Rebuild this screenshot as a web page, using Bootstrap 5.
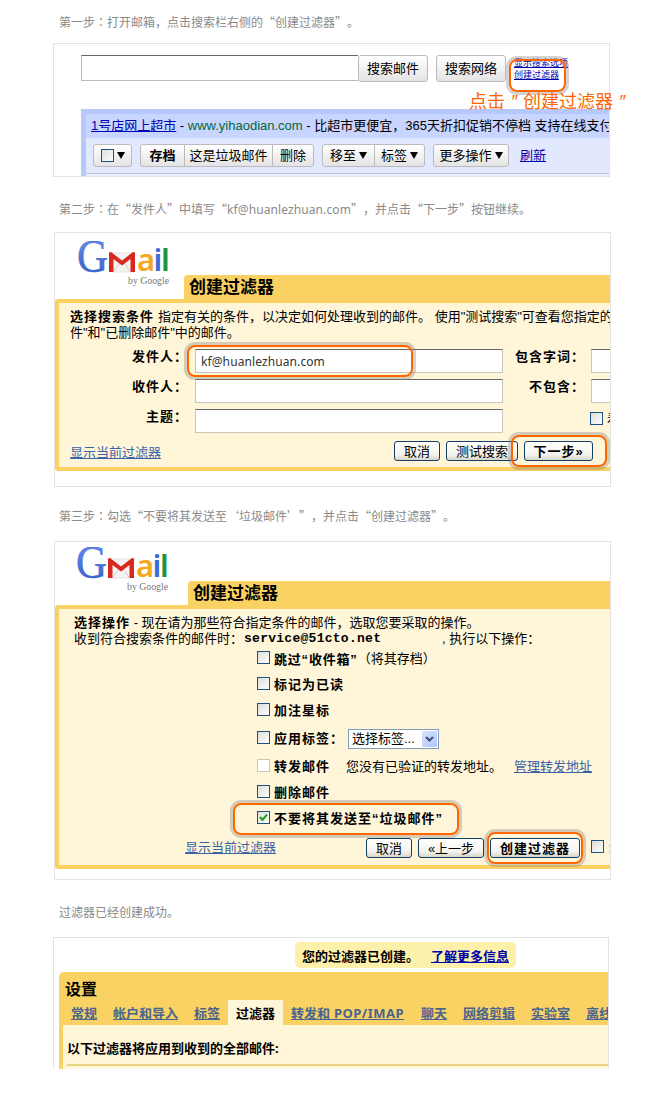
<!DOCTYPE html>
<html lang="zh-CN">
<head>
<meta charset="utf-8">
<meta name="viewport" content="width=device-width, initial-scale=1">
<title>创建过滤器</title>
<link href="https://cdn.jsdelivr.net/npm/bootstrap@5.3.0/dist/css/bootstrap.min.css" rel="stylesheet">
<style>
body{background:#fff;color:#000;font:13px/16px "Liberation Sans","Noto Sans CJK SC",sans-serif;width:666px;height:1110px;overflow:hidden;white-space:nowrap;text-spacing-trim:space-all}
.step{font:12px/18px "Noto Sans CJK SC",sans-serif;color:#8a8a8a;height:18px;margin:0 0 0 59px;font-feature-settings:"chws" 0,"halt" 0}
.step .colon{font-family:"Noto Sans CJK TC",sans-serif}
.step .latin,.fld{font-family:"Noto Sans","Noto Sans CJK SC",sans-serif}
.step .latin{font-size:12px;letter-spacing:.1px}
.shot{border:1px solid #e3e3e3;overflow:hidden;width:557px}
.wide{letter-spacing:1px;font-weight:700}
.cjk{font-family:"Noto Sans CJK SC",sans-serif}
.ring{position:absolute;border:2px solid #f60;border-radius:8px;box-shadow:0 0 0 3px rgba(120,120,120,.33);z-index:3}
/* mail search panel */
.one{height:134px;margin:12px 0 0 53px}
.srow{padding:11px 0 0 27px;height:65px}
.sbox{width:277px;height:26px;border:1px solid #bbb;border-top-color:#666;border-right:0}
.gb{background:linear-gradient(#fff,#e4e4e4);border:1px solid #bbb;border-radius:3px;color:#000;font-size:13px;line-height:16px;padding:0;display:flex;align-items:center;justify-content:center}
.sb{width:70px;height:27px}
.mini{font-size:9px;line-height:12px;margin:2px 0 0 8px}
.mini a,.blue{color:#0000b0;text-decoration:underline}
.mini a{display:block}
.call{position:absolute;left:469px;top:89px;font:18px/22px "Noto Sans CJK SC",sans-serif;color:#f60;z-index:4}
.call i{display:inline-block;width:18px;text-align:center;font-family:"Liberation Sans",sans-serif}
.mail{margin-left:27px;background:#b7c8fc;padding:5px 0 0 5px;height:70px}
.head1{background:#c8d5ff;height:24px;padding:4px 0 0 5px}
.green{color:#00683c}
.tools{background:#e2e9ff;height:36px;padding:6px 0 0 7px;border-bottom:1px solid #bfc6d8;box-shadow:0 4px 0 #e8eeff}
.tools .gb{height:23px;border-radius:0;margin-right:-1px}
.tools .st{border-radius:3px 0 0 3px}.tools .en{border-radius:0 3px 3px 0;margin-right:0}.tools .bo{border-radius:3px;margin-right:0}
.tri{width:0;height:0;border:4px solid transparent;border-top:7px solid #000;border-bottom:0;margin-left:3px}
.cbx{width:13px;height:13px;border:1px solid #1c5180;background:linear-gradient(135deg,#dcdcd7,#fff);flex:none}
.cbx.off{border-color:#cac8bb;background:#fff}
/* yellow form panels */
.two{height:255px;margin:14px 0 0 54px}
.three{height:339px;margin:16px 0 0 54px}
.top{height:66px}
.tab1{background:#fad163;border-radius:4px 0 0 0;height:28px;font-weight:700;font-size:17px;line-height:26px;padding-left:5px;flex:1;align-self:flex-end;margin-bottom:-4px}
.ybox{border:4px solid #fad163;border-right:0;border-radius:4px 0 0 4px;background:#fff5d8}
.ybox2{height:172px;padding:6px 0 0 11px}
.ybox3{height:264px;padding:6px 0 0 15px}
.frow{display:grid;grid-template-columns:118px 7px 308px 6px 76px 6px 40px;height:30px}
.frow .wide{text-align:right;padding-top:0}
.fld{height:24px;border:1px solid #c9c7ba;border-top-color:#666;background:#fff;font-size:12px;line-height:23px;color:#333;padding-left:5px;letter-spacing:.1px}
.link{color:#3c62a6;text-decoration:underline;flex:none}
.xp{height:20px;border:1px solid #12406b;border-radius:3px;background:linear-gradient(#fff,#f3f3ee 70%,#d8d4c8);color:#000;font-size:13px;line-height:17px;text-align:center;padding:0;flex:none}
.opt{display:flex;align-items:center;height:26px;padding-left:183px}
.opt .cbx{margin-bottom:3px}
.opt .wide{margin-left:4px}
.sel{width:91px;height:20px;border:1px solid #7f9db9;background:#fff;padding:0 1px 0 3px;display:flex;align-items:center;justify-content:space-between}
.arr{width:15px;height:16px;background:linear-gradient(135deg,#d7e3ff,#b2c6f5);border-radius:1px}
/* settings panel */
.four{height:132px;margin:16px 0 0 53px;border-bottom:0;width:556px;font-family:"Noto Sans","Noto Sans CJK SC",sans-serif;font-weight:700}
.note{background:#fdf0aa;border-radius:5px;width:221px;height:26px;margin:4px 0 0 241px;padding:6px 7px 0}
.set{margin:4px 0 0 5px;background:#fad163;border-radius:5px 0 0 0;height:98px;padding-left:4px}
.set h1{font-size:16px;line-height:20px;font-weight:700;margin:0;padding:7px 0 0 2px;height:28px}
.tabs{height:25px;display:grid;grid-template-columns:42px 81px 34px 63px 130px 42px 68px 55px 40px;padding-left:8px;line-height:27px}
.tabs a{color:#47658f;text-decoration:underline}
.act{background:#fff5d8;width:55px;text-align:center}
.body4{background:#fff5d8;height:45px;padding:15px 0 0 4px}
.rule{border-top:2px solid #ead283;background:#fff8de;height:5px;margin-top:8px}
</style>
</head>
<body>
<svg width="0" height="0" class="position-absolute"><defs>
<linearGradient id="gg" x2="0" y2="1"><stop offset="0" stop-color="#6d94ea"/><stop offset="1" stop-color="#2e59c9"/></linearGradient>
<symbol id="gmail" viewBox="0 0 100 50">
<text x="0" y="31" font-family="Liberation Serif" font-size="46" fill="url(#gg)" stroke="#3f69d0" stroke-width=".5" textLength="31" lengthAdjust="spacingAndGlyphs">G</text>
<path d="M33 12H57V31H33Z" fill="#f6f4f2" stroke="#d9d4d0" stroke-width=".6"/>
<path d="M37 30L43 22M53 30L47 22" stroke="#ccc" fill="none"/>
<path d="M32 12Q32 11 34 11L45 19.5L56 11Q58 11 58 12V31H53.5V18L45 24.5L36.5 18V31H32Z" fill="#d8281f"/>
<text y="30" font-family="Noto Sans" font-size="31" font-weight="600"><tspan x="60" fill="#f5a81c">a</tspan><tspan x="76.5" fill="#3d6ad6">i</tspan><tspan x="84" fill="#209341">l</tspan></text>
<text x="51" y="43" font-family="Liberation Serif" font-size="10" fill="#777" textLength="41" lengthAdjust="spacingAndGlyphs">by Google</text>
</symbol></defs></svg>

<p class="step" style="margin-top:13px">第一步<span class="colon" lang="zh-TW">：</span>打开邮箱，点击搜索栏右侧的“创建过滤器<span>”</span><span class="d-inline-block">。</span></p>
<section class="shot one">
  <div class="srow d-flex">
    <div class="sbox"></div>
    <button class="gb sb">搜索邮件</button>
    <button class="gb sb ms-2">搜索网络</button>
    <div class="mini"><a href="#">显示搜索选项</a><a href="#">创建过滤器</a></div>
  </div>
  <div class="mail">
    <div class="head1"><a href="#" class="blue">1号店网上超市</a> - <span class="green">www.yihaodian.com</span> - 比超市更便宜，365天折扣促销不停档 支持在线支付</div>
    <div class="tools d-flex">
      <button class="gb bo me-2" style="width:39px"><span class="cbx"></span><span class="tri"></span></button>
      <button class="gb st fw-bold" style="width:45px">存档</button>
      <button class="gb" style="width:89px">这是垃圾邮件</button>
      <button class="gb en me-2" style="width:42px">删除</button>
      <button class="gb st" style="width:53px">移至<span class="tri"></span></button>
      <button class="gb en me-2" style="width:51px">标签<span class="tri"></span></button>
      <button class="gb bo" style="width:76px">更多操作<span class="tri"></span></button>
      <a href="#" class="blue pt-1" style="margin-left:11px">刷新</a>
    </div>
  </div>
</section>
<div class="ring" style="left:509px;top:59px;width:57px;height:33px"></div>
<div class="call">点击<i>″</i>创建过滤器<i>″</i></div>

<p class="step" style="margin-top:23px">第二步<span class="colon" lang="zh-TW">：</span>在“发件人”中填写“<span class="latin">kf@huanlezhuan.com</span>”<span class="d-inline-block">，</span>并点击“下一步”按钮继续。</p>
<section class="shot two">
  <div class="top d-flex">
    <svg width="100" height="50" style="margin:8px 7px 0 22px"><use href="#gmail"/></svg>
    <div class="tab1">创建过滤器</div>
  </div>
  <div class="ybox ybox2">
    <div><span class="wide">选择搜索条件</span><span class="ms-1">指定有关的条件，以决定如何处理收到的邮件。 使用"测试搜索"可查看您指定的</span></div>
    <div style="height:18px">件"和"已删除邮件"中的邮件。</div>
    <div style="padding-top:6px">
      <div class="frow"><span class="wide">发件人：</span><span></span><div class="fld">kf@huanlezhuan.com</div><span></span><span class="wide">包含字词：</span><span></span><div class="fld"></div></div>
      <div class="frow"><span class="wide">收件人：</span><span></span><div class="fld"></div><span></span><span class="wide">不包含：</span><span></span><div class="fld"></div></div>
      <div class="frow"><span class="wide">主题：</span><span></span><div class="fld"></div><span></span><span></span><span></span><div class="d-flex gap-1" style="padding-top:3px;margin-left:-1px"><span class="cbx"></span>看</div></div>
    </div>
    <div class="d-flex" style="padding-top:2px">
      <a href="#" class="link" style="width:324px;padding-top:4px">显示当前过滤器</a>
      <button class="xp" style="width:46px">取消</button>
      <button class="xp" style="width:72px;margin:0 6px">测试搜索</button>
      <button class="xp wide" style="width:69px">下一步»</button>
    </div>
  </div>
</section>
<div class="ring" style="left:187px;top:345px;width:226px;height:32px"></div>
<div class="ring" style="left:511px;top:435px;width:96px;height:32px"></div>

<p class="step" style="margin-top:20px">第三步<span class="colon" lang="zh-TW">：</span>勾选“不要将其发送至‘垃圾邮件’<span class="d-inline-block">”</span><span class="d-inline-block">，</span>并点击“创建过滤器”<span class="d-inline-block">。</span></p>
<section class="shot three">
  <div class="top d-flex" style="height:63px">
    <svg width="100" height="50" style="margin:5px 12px 0 21px"><use href="#gmail"/></svg>
    <div class="tab1">创建过滤器</div>
  </div>
  <div class="ybox ybox3">
    <div><span class="wide">选择操作</span> - 现在请为那些符合指定条件的邮件，选取您要采取的操作。</div>
    <div class="d-flex"><span style="width:170px">收到符合搜索条件的邮件时：</span><b style="font-family:'Liberation Mono',monospace;letter-spacing:.27px;width:198px">service@51cto.net</b><span>,&nbsp;执行以下操作：</span></div>
    <div style="margin-top:-1px">
      <div class="opt"><span class="cbx"></span><span class="wide cjk" style="letter-spacing:.8px">跳过<span style="font-family:'Liberation Sans'">“</span>收件箱<span style="font-family:'Liberation Sans'">”</span></span>（将其存档）</div>
      <div class="opt"><span class="cbx"></span><span class="wide">标记为已读</span></div>
      <div class="opt"><span class="cbx"></span><span class="wide">加注星标</span></div>
      <div class="opt" style="height:29px"><span class="cbx"></span><span class="wide" style="width:74px">应用标签：</span><div class="sel"><span>选择标签...</span><svg class="arr" viewBox="0 0 15 16"><path d="M4 6l3.5 3.5L11 6" fill="none" stroke="#3c5484" stroke-width="2.2"/></svg></div></div>
      <div class="opt" style="height:27px"><span class="cbx off"></span><span class="wide" style="width:72px">转发邮件</span><span style="width:168px">您没有已验证的转发地址。</span><a href="#" class="link">管理转发地址</a></div>
      <div class="opt"><span class="cbx"></span><span class="wide">删除邮件</span></div>
      <div class="opt"><span class="cbx d-flex"><svg width="11" height="11"><path d="M2 5l2.5 3L9 2.5" fill="none" stroke="#21a121" stroke-width="2"/></svg></span><span class="wide">不要将其发送至<span style="font-family:'Liberation Sans'">“</span>垃圾邮件<span style="font-family:'Liberation Sans'">”</span></span></div>
    </div>
    <div class="d-flex" style="margin:6px 0 0 111px">
      <a href="#" class="link" style="width:181px;padding-top:2px">显示当前过滤器</a>
      <button class="xp" style="width:46px">取消</button>
      <button class="xp" style="width:66px;margin:0 6px">«上一步</button>
      <button class="xp wide" style="width:90px">创建过滤器</button>
      <span class="cbx" style="margin:2px 5px 0 11px"></span>
      <span class="pt-1">将</span>
    </div>
  </div>
</section>
<div class="ring" style="left:233px;top:803px;width:226px;height:32px"></div>
<div class="ring" style="left:487px;top:832px;width:96px;height:32px"></div>

<p class="step" style="margin-top:23px">过滤器已经创建成功。</p>
<section class="shot four">
  <div class="note d-flex justify-content-between"><span>您的过滤器已创建。</span><a href="#" class="blue">了解更多信息</a></div>
  <div class="set">
    <h1>设置</h1>
    <nav class="tabs"><a href="#">常规</a><a href="#">帐户和导入</a><a href="#">标签</a><span class="act">过滤器</span><a href="#">转发和<span style="letter-spacing:.5px"> POP/IMAP</span></a><a href="#">聊天</a><a href="#">网络剪辑</a><a href="#">实验室</a><a href="#">离线</a></nav>
    <div class="body4">以下过滤器将应用到收到的全部邮件:<div class="rule"></div></div>
  </div>
</section>
<script src="https://cdn.jsdelivr.net/npm/bootstrap@5.3.0/dist/js/bootstrap.bundle.min.js"></script>
</body>
</html>
